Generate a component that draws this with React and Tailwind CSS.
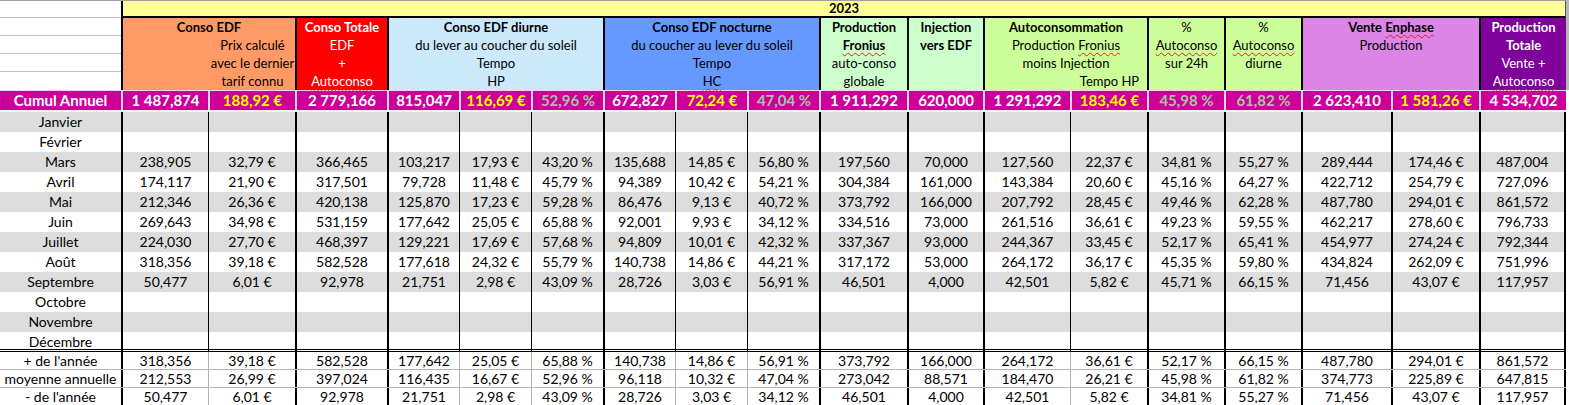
import React from 'react';

const GRID =
  'grid grid-cols-[121px_87px_87px_92px_72px_72px_72px_72px_72px_72px_88px_76px_87px_77px_77px_77px_90px_88px_87px]';

// colonnes qui ouvrent un bloc (bordure épaisse)
const thick = new Set([1, 3, 4, 7, 10, 11, 12, 14, 15, 16, 17, 18]);
const euroCols = new Set([2, 5, 8, 13, 17]);
const pctCols = new Set([6, 9, 14, 15]);

const W = ({ children }) => (
  <span className="underline decoration-wavy decoration-[#e0201c] decoration-1 underline-offset-2">{children}</span>
);

const groups = [
  {
    span: 'col-span-2', bg: 'bg-[#ff9966]', text: 'text-black',
    lines: [
      { t: 'Conso EDF', b: true },
      { t: 'Prix calculé', r: true },
      { t: 'avec le dernier', r: true },
      { t: 'tarif connu', r: true },
    ],
  },
  {
    span: 'col-span-1', bg: 'bg-[#ff0000]', text: 'text-white',
    lines: [{ t: 'Conso Totale', b: true }, { t: 'EDF' }, { t: '+' }, { t: <W>Autoconso</W> }],
  },
  {
    span: 'col-span-3', bg: 'bg-[#cce8fb]', text: 'text-black',
    lines: [{ t: 'Conso EDF diurne', b: true }, { t: 'du lever au coucher du soleil' }, { t: 'Tempo' }, { t: 'HP' }],
  },
  {
    span: 'col-span-3', bg: 'bg-[#6699ff]', text: 'text-black',
    lines: [{ t: 'Conso EDF nocturne', b: true }, { t: 'du coucher au lever du soleil' }, { t: 'Tempo' }, { t: <W>HC</W> }],
  },
  {
    span: 'col-span-1', bg: 'bg-[#ccffcc]', text: 'text-black',
    lines: [{ t: 'Production', b: true }, { t: <W>Fronius</W>, b: true }, { t: 'auto-conso' }, { t: 'globale' }],
  },
  {
    span: 'col-span-1', bg: 'bg-[#ccffcc]', text: 'text-black',
    lines: [{ t: 'Injection', b: true }, { t: 'vers EDF', b: true }],
  },
  {
    span: 'col-span-2', bg: 'bg-[#ccff99]', text: 'text-black',
    lines: [
      { t: 'Autoconsommation', b: true },
      { t: <>Production <W>Fronius</W></> },
      { t: 'moins Injection' },
      { t: 'Tempo HP', r: true },
    ],
  },
  {
    span: 'col-span-1', bg: 'bg-[#ccff99]', text: 'text-black',
    lines: [{ t: '%' }, { t: <W>Autoconso</W> }, { t: 'sur 24h' }],
  },
  {
    span: 'col-span-1', bg: 'bg-[#ccff99]', text: 'text-black',
    lines: [{ t: '%' }, { t: <W>Autoconso</W> }, { t: 'diurne' }],
  },
  {
    span: 'col-span-2', bg: 'bg-[#db85e7]', text: 'text-black',
    lines: [{ t: <>Vente <W>Enphase</W></>, b: true }, { t: 'Production' }],
  },
  {
    span: 'col-span-1', bg: 'bg-[#80009c]', text: 'text-white',
    lines: [{ t: 'Production', b: true }, { t: 'Totale', b: true }, { t: 'Vente +' }, { t: <W>Autoconso</W> }],
  },
];

const cumul = [
  '1 487,874', '188,92 €', '2 779,166', '815,047', '116,69 €', '52,96 %', '672,827', '72,24 €', '47,04 %',
  '1 911,292', '620,000', '1 291,292', '183,46 €', '45,98 %', '61,82 %', '2 623,410', '1 581,26 €', '4 534,702',
];

const months = [
  ['Janvier', []],
  ['Février', []],
  ['Mars', ['238,905', '32,79 €', '366,465', '103,217', '17,93 €', '43,20 %', '135,688', '14,85 €', '56,80 %', '197,560', '70,000', '127,560', '22,37 €', '34,81 %', '55,27 %', '289,444', '174,46 €', '487,004']],
  ['Avril', ['174,117', '21,90 €', '317,501', '79,728', '11,48 €', '45,79 %', '94,389', '10,42 €', '54,21 %', '304,384', '161,000', '143,384', '20,60 €', '45,16 %', '64,27 %', '422,712', '254,79 €', '727,096']],
  ['Mai', ['212,346', '26,36 €', '420,138', '125,870', '17,23 €', '59,28 %', '86,476', '9,13 €', '40,72 %', '373,792', '166,000', '207,792', '28,45 €', '49,46 %', '62,28 %', '487,780', '294,01 €', '861,572']],
  ['Juin', ['269,643', '34,98 €', '531,159', '177,642', '25,05 €', '65,88 %', '92,001', '9,93 €', '34,12 %', '334,516', '73,000', '261,516', '36,61 €', '49,23 %', '59,55 %', '462,217', '278,60 €', '796,733']],
  ['Juillet', ['224,030', '27,70 €', '468,397', '129,221', '17,69 €', '57,68 %', '94,809', '10,01 €', '42,32 %', '337,367', '93,000', '244,367', '33,45 €', '52,17 %', '65,41 %', '454,977', '274,24 €', '792,344']],
  ['Août', ['318,356', '39,18 €', '582,528', '177,618', '24,32 €', '55,79 %', '140,738', '14,86 €', '44,21 %', '317,172', '53,000', '264,172', '36,17 €', '45,35 %', '59,80 %', '434,824', '262,09 €', '751,996']],
  ['Septembre', ['50,477', '6,01 €', '92,978', '21,751', '2,98 €', '43,09 %', '28,726', '3,03 €', '56,91 %', '46,501', '4,000', '42,501', '5,82 €', '45,71 %', '66,15 %', '71,456', '43,07 €', '117,957']],
  ['Octobre', []],
  ['Novembre', []],
  ['Décembre', []],
];

const summary = [
  ["+ de l'année", ['318,356', '39,18 €', '582,528', '177,642', '25,05 €', '65,88 %', '140,738', '14,86 €', '56,91 %', '373,792', '166,000', '264,172', '36,61 €', '52,17 %', '66,15 %', '487,780', '294,01 €', '861,572']],
  ['moyenne annuelle', ['212,553', '26,99 €', '397,024', '116,435', '16,67 €', '52,96 %', '96,118', '10,32 €', '47,04 %', '273,042', '88,571', '184,470', '26,21 €', '45,98 %', '61,82 %', '374,773', '225,89 €', '647,815']],
  ["- de l'année", ['50,477', '6,01 €', '92,978', '21,751', '2,98 €', '43,09 %', '28,726', '3,03 €', '34,12 %', '46,501', '4,000', '42,501', '5,82 €', '34,81 %', '55,27 %', '71,456', '43,07 €', '117,957']],
];

const cols = Array.from({ length: 18 }, (_, i) => i + 1);

function edge(i, light) {
  const right = i === 18 ? ' border-r-2 border-r-black' : '';
  if (thick.has(i)) return 'border-l-2 border-l-black' + right;
  return (light ? 'border-l border-l-[#b4b4b4]' : 'border-l border-l-black') + right;
}

function HeaderGroup({ g }) {
  return (
    <div className={`${g.span} ${g.bg} ${g.text} border-l-2 border-l-black flex flex-col`}>
      {g.lines.map((l, k) => (
        <div
          key={k}
          className={`h-[18px] leading-[18px] text-[13px] text-center whitespace-nowrap ${l.b ? 'font-bold' : ''} ${l.r ? 'pl-[87px]' : ''}`}
        >
          {l.t}
        </div>
      ))}
    </div>
  );
}

function MonthRow({ name, vals, idx, last }) {
  const bg = idx % 2 === 0 ? 'bg-[#dddddd]' : 'bg-white';
  const bottom = last ? 'border-b-[3px] border-double border-b-black' : '';
  return (
    <div className={`${GRID} h-[20px] ${bg} ${bottom} text-[14px] leading-[19px] text-black`}>
      <div className="text-center">{name}</div>
      {cols.map((c) => (
        <div key={c} className={`${edge(c, false)} text-center whitespace-nowrap`}>
          {vals[c - 1] || ''}
        </div>
      ))}
    </div>
  );
}

export default function App() {
  return (
    <div className="w-[1569px] h-[405px] overflow-hidden bg-white font-['Lato',sans-serif] flex">
      <div className="w-[1566px] shrink-0">
        {/* ligne année */}
        <div className={`${GRID} h-[18px] border-t border-t-[#a0a0a0]`}>
          <div className="border-b border-b-[#c0c0c0]" />
          <div className="col-span-18 bg-[#ffff99] border-l-2 border-l-black border-b-2 border-b-black border-r border-r-[#555555] text-center text-[13px] font-bold leading-[15px]">
            2023
          </div>
        </div>

        {/* en-têtes */}
        <div className={`${GRID} h-[72px]`}>
          <div className="flex flex-col">
            <div className="h-[18px] border-b border-b-[#c0c0c0]" />
            <div className="h-[18px] border-b border-b-[#c0c0c0]" />
            <div className="h-[18px] border-b border-b-[#c0c0c0]" />
            <div className="h-[18px]" />
          </div>
          {groups.map((g, i) => (
            <HeaderGroup key={i} g={g} />
          ))}
        </div>

        {/* cumul annuel */}
        <div className={`${GRID} h-[22px] bg-[#cc0099] border-t border-t-[#f2d4ec] border-b-2 border-b-[#f4f4f4] text-[15px] font-bold leading-[19px]`}>
          <div className="text-center text-white">Cumul Annuel</div>
          {cols.map((c) => (
            <div
              key={c}
              className={`border-l-2 border-l-[#f4d6ee] text-center whitespace-nowrap ${
                euroCols.has(c) ? 'text-[#ffff00]' : pctCols.has(c) ? 'text-[#aac4a2]' : 'text-white'
              }`}
            >
              {cumul[c - 1]}
            </div>
          ))}
        </div>

        {months.map(([name, vals], i) => (
          <MonthRow key={name} name={name} vals={vals} idx={i} last={i === months.length - 1} />
        ))}

        {summary.map(([name, vals]) => (
          <div key={name} className={`${GRID} h-[18px] border-b border-b-[#b4b4b4] text-[14px] leading-[17px] text-black`}>
            <div className="text-center whitespace-nowrap">{name}</div>
            {cols.map((c) => (
              <div key={c} className={`${edge(c, true)} text-center whitespace-nowrap`}>
                {vals[c - 1]}
              </div>
            ))}
          </div>
        ))}
      </div>
      <div className="flex-1 flex flex-col">
        <div className="h-[90px] bg-[#b8b8b8]" />
        <div className="flex-1 bg-white" />
      </div>
    </div>
  );
}
